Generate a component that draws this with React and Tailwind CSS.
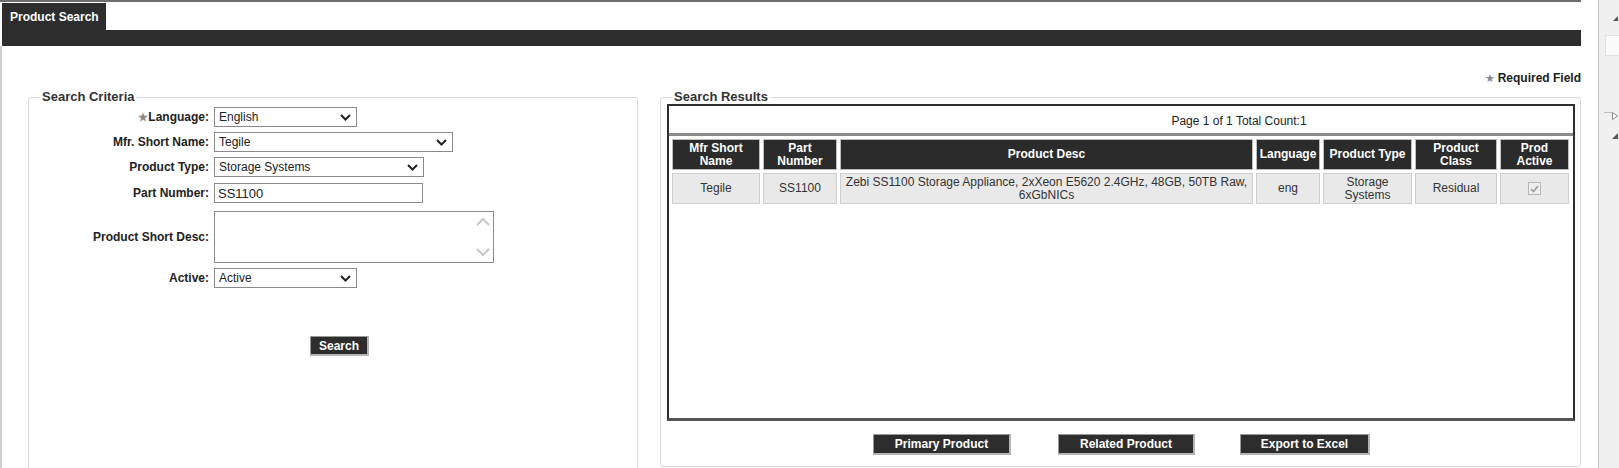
import React from "react";

function Chevron({ color = "#222", w = 11, h = 7, sw = 2 }) {
  return (
    <svg width={w} height={h} viewBox="0 0 11 7" className="shrink-0">
      <path d="M1 1 L5.5 5.5 L10 1" fill="none" stroke={color} strokeWidth={sw} />
    </svg>
  );
}

function Select({ width, text }) {
  return (
    <div
      className="h-[20px] border border-[#8a8a8a] bg-white flex items-center justify-between pl-[4px] pr-[5px]"
      style={{ width }}
    >
      <span className="text-[12px] text-[#222] leading-none">{text}</span>
      <Chevron />
    </div>
  );
}

function Row({ label, star, children, className = "" }) {
  return (
    <div className={"flex items-center " + className}>
      <div className="w-[180px] text-right font-bold text-[12px] text-[#222]">
        {star && <span className="text-[#8a8a8a] text-[11px]">★</span>}
        {label}
      </div>
      <div className="ml-[5px] flex">{children}</div>
    </div>
  );
}

function DarkButton({ width, height = 21, children }) {
  return (
    <div
      className="bg-[#2d2d2d] border border-[#9a9a9a] border-r-2 border-b-2 border-r-[#b5b5b5] border-b-[#b5b5b5] text-white font-bold text-[12px] flex items-center justify-center"
      style={{ width, height }}
    >
      {children}
    </div>
  );
}

export default function App() {
  const th =
    "bg-[#2b2b2b] text-white font-bold text-[12px] leading-[13px] border border-[#bdbdbd] text-center align-middle px-[2px]";
  const td =
    "bg-[#e9e9e9] text-[#333] text-[12px] leading-[13px] border border-[#cfcfcf] text-center align-middle px-[2px]";
  return (
    <div className="w-[1619px] h-[468px] overflow-hidden bg-white flex font-['Liberation_Sans',Arial,sans-serif] text-[12px] text-[#222]">
      {/* main column */}
      <div className="w-[1598px] flex flex-col">
        <div className="w-[1581px] h-[2px] bg-[#6e6e6e] shrink-0" />
        <div className="flex flex-1">
          <div className="w-[2px] bg-[#cfcfcf] mt-[44px]" />
          <div className="w-[1579px] flex flex-col">
            <div className="h-[1px]" />
            <div className="h-[27px] flex">
              <div className="w-[104px] bg-[#2d2d2d] text-white font-bold text-[12px] flex items-center pl-[8px] pt-[1px]">
                Product Search
              </div>
            </div>
            <div className="h-[16px] bg-[#2d2d2d]" />
            {/* required field */}
            <div className="flex justify-end mt-[25px] h-[14px] items-center">
              <span className="text-[#8a8a8a] text-[11px] mr-[3px]">★</span>
              <span className="font-bold text-[12px] text-[#222]">Required Field</span>
            </div>
            {/* fieldsets */}
            <div className="flex mt-[5px]">
              <fieldset className="ml-[26px] w-[610px] h-[400px] border border-[#d9d9d9] rounded-[3px] shrink-0">
                <legend className="ml-[11px] px-[2px] font-bold text-[13px] leading-[14px] text-[#333]">
                  Search Criteria
                </legend>
                <div className="flex flex-col mt-[3px]">
                  <Row label="Language:" star>
                    <Select width={143} text="English" />
                  </Row>
                  <Row label="Mfr. Short Name:" className="mt-[5px]">
                    <Select width={239} text="Tegile" />
                  </Row>
                  <Row label="Product Type:" className="mt-[5px]">
                    <Select width={210} text="Storage Systems" />
                  </Row>
                  <Row label="Part Number:" className="mt-[6px]">
                    <div className="w-[209px] h-[20px] border border-[#8a8a8a] bg-white flex items-center pl-[3px] text-[13px] text-[#222] leading-none">
                      SS1100
                    </div>
                  </Row>
                  <Row label="Product Short Desc:" className="mt-[8px]">
                    <div className="w-[280px] h-[52px] border border-[#8a8a8a] bg-white flex justify-end">
                      <div className="w-[18px] flex flex-col items-center justify-between pt-[5px] pb-[5px] pr-[3px]">
                        <svg width="14" height="9" viewBox="0 0 14 9">
                          <path d="M1 8 L7 2 L13 8" fill="none" stroke="#c6c6c6" strokeWidth="2" />
                        </svg>
                        <svg width="14" height="9" viewBox="0 0 14 9">
                          <path d="M1 1 L7 7 L13 1" fill="none" stroke="#c6c6c6" strokeWidth="2" />
                        </svg>
                      </div>
                    </div>
                  </Row>
                  <Row label="Active:" className="mt-[5px]">
                    <Select width={143} text="Active" />
                  </Row>
                  <div className="mt-[48px] ml-[281px]">
                    <DarkButton width={59} height={20}>Search</DarkButton>
                  </div>
                </div>
              </fieldset>

              <fieldset className="ml-[22px] w-[921px] h-[377px] border border-[#d9d9d9] rounded-[3px] shrink-0">
                <legend className="ml-[11px] px-[2px] font-bold text-[13px] leading-[14px] text-[#333]">
                  Search Results
                </legend>
                <div className="ml-[6px] mr-[5px] h-[317px] border-2 border-[#2e2e2e] border-b-[3px] border-b-[#555] flex flex-col">
                  <div className="h-[27px] flex items-center justify-center pl-[236px] pt-[2px] text-[12px] text-[#222]">
                    Page 1 of 1 Total Count:1
                  </div>
                  <div className="h-[3px] bg-[#8c8c8c]" />
                  <table className="w-[903px] table-fixed border-separate border-spacing-[3px]">
                    <thead>
                      <tr className="h-[31px]">
                        <th className={th + " w-[88px]"}>Mfr Short<br />Name</th>
                        <th className={th + " w-[74px]"}>Part<br />Number</th>
                        <th className={th}>Product Desc</th>
                        <th className={th + " w-[64px]"}>Language</th>
                        <th className={th + " w-[89px]"}>Product Type</th>
                        <th className={th + " w-[82px]"}>Product<br />Class</th>
                        <th className={th + " w-[69px]"}>Prod<br />Active</th>
                      </tr>
                    </thead>
                    <tbody>
                      <tr className="h-[31px]">
                        <td className={td}>Tegile</td>
                        <td className={td}>SS1100</td>
                        <td className={td}>
                          Zebi SS1100 Storage Appliance, 2xXeon E5620 2.4GHz, 48GB, 50TB Raw, 6xGbNICs
                        </td>
                        <td className={td}>eng</td>
                        <td className={td}>Storage<br />Systems</td>
                        <td className={td}>Residual</td>
                        <td className={td}>
                          <div className="mx-auto w-[13px] h-[13px] border border-[#b5b5b5] bg-[#efefef] flex items-center justify-center">
                            <svg width="9" height="8" viewBox="0 0 9 8">
                              <path d="M1 4 L3.5 6.5 L8 1" fill="none" stroke="#9a9a9a" strokeWidth="1.6" />
                            </svg>
                          </div>
                        </td>
                      </tr>
                    </tbody>
                  </table>
                </div>
                <div className="flex mt-[13px] ml-[212px]">
                  <DarkButton width={138}>Primary Product</DarkButton>
                  <div className="ml-[47px]">
                    <DarkButton width={137}>Related Product</DarkButton>
                  </div>
                  <div className="ml-[45px]">
                    <DarkButton width={130}>Export to Excel</DarkButton>
                  </div>
                </div>
              </fieldset>
            </div>
          </div>
        </div>
      </div>
      {/* right strip */}
      <div className="w-[21px] h-[468px] bg-[#f0f0f0] border-l border-[#c4c4c4] shrink-0">
        <svg width="20" height="468" viewBox="0 0 20 468">
          <path d="M19 16 L19 21 L14 21 Z" fill="#555" />
          <rect x="6.5" y="35.5" width="14" height="20" fill="#fafafa" stroke="#e0e0e0" />
          <path d="M5 112.5 L13 112.5" stroke="#bbb" strokeWidth="1" />
          <path d="M13.5 112.5 L18.5 116 L13.5 119.5 Z" fill="#fff" stroke="#888" strokeWidth="1" />
          <path d="M19 133 L19 139 L13 139 Z" fill="#555" />
        </svg>
      </div>
    </div>
  );
}
